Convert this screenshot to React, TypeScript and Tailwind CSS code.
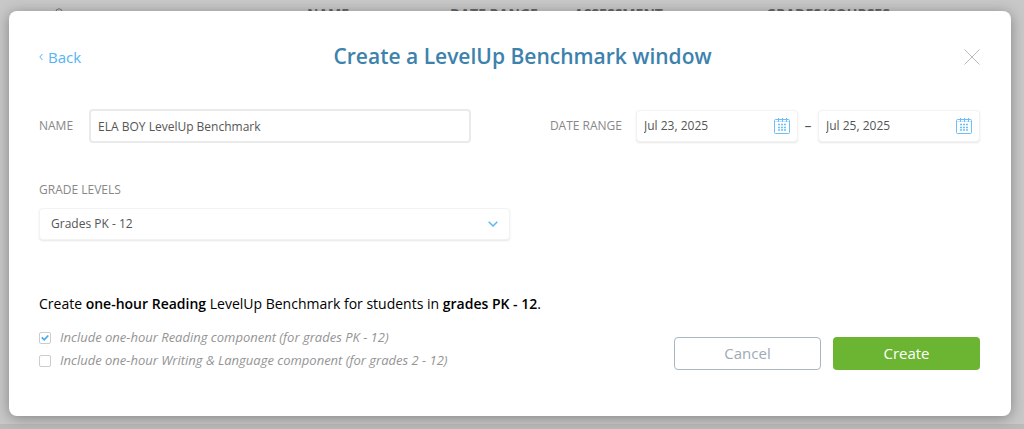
import React, { useState } from 'react';

const columns = [
  { label: "NAME", className: "w-[143px]" },
  { label: "DATE RANGE", className: "w-[124px]" },
  { label: "ASSESSMENT", className: "w-[192px]" },
  { label: "GRADES/COURSES", className: "flex-1" }
];

const CalendarIcon = () => (
  <svg className="h-4 w-4" viewBox="0 0 16 16" fill="none" stroke="#6cc0f7">
    <rect x="0.5" y="1.5" width="15" height="14" rx="1" />
    <path d="M1 3.5h14" strokeOpacity="0.4" />
    <path d="M4.5 0v4M8.5 0v4M12.5 0v4" />
    <path d="M4 6.5h9M4 9.5h9M4 12h9" strokeWidth="1.6" strokeDasharray="2 1" />
  </svg>
);

const DateField = ({ id, label, defaultValue }: { id: string; label: string; defaultValue: string }) => (
  <div className="flex h-8 w-[162px] items-center rounded border border-[#f3f3f3] bg-white px-[7px] shadow-[0_1px_2px_rgba(0,0,0,0.1)]">
    <input
      id={id}
      type="text"
      aria-label={label}
      defaultValue={defaultValue}
      className="min-w-0 flex-1 text-xs text-[#555] outline-none"
    />
    <button type="button" aria-label={`Open ${label.toLowerCase()} calendar`}>
      <CalendarIcon />
    </button>
  </div>
);

const ComponentOption = ({ label, defaultChecked = false }: { label: string; defaultChecked?: boolean }) => {
  const [checked, setChecked] = useState(defaultChecked);

  return (
    <label className="flex h-[23px] items-center gap-[9px] text-[13px] italic text-[#949494]">
      <span className="grid h-3 w-3">
        <input
          type="checkbox"
          checked={checked}
          onChange={(e) => setChecked(e.target.checked)}
          className="col-start-1 row-start-1 h-3 w-3 appearance-none rounded-[2px] border border-[#ccc] bg-white"
        />
        {checked && (
          <svg
            className="pointer-events-none col-start-1 row-start-1 h-3 w-3"
            viewBox="0 0 12 12"
            fill="none"
            stroke="#45aef0"
            strokeWidth="1.8"
          >
            <path d="M2.8 5.4l2.4 2.4L9.3 3.5" />
          </svg>
        )}
      </span>
      {label}
    </label>
  );
};

const App = () => {
  return (
    <div className="relative min-h-screen overflow-hidden bg-[#c8c8c8] font-['Open_Sans',sans-serif]">
      {/* Dimmed page behind the dialog */}
      <div className="absolute inset-0 flex flex-col justify-between">
        <div className="flex pt-1 text-sm font-bold text-[#666]">
          <div className="w-[307px] pl-[55px] pt-1">
            <svg className="h-2 w-2" viewBox="0 0 8 8" fill="none" stroke="#777">
              <circle cx="4" cy="4" r="3.2" />
            </svg>
          </div>
          {columns.map((column) => (
            <div key={column.label} className={column.className}>{column.label}</div>
          ))}
        </div>
        <div className="h-[5px] bg-[#bababa]" />
      </div>

      {/* Dialog */}
      <div
        role="dialog"
        aria-labelledby="dialog-title"
        className="relative mb-3 ml-[9px] mr-[13px] mt-[11px] rounded-lg bg-white pb-[44px] pl-[30px] pr-[31px] pt-[30px] shadow-[0_2px_14px_rgba(0,0,0,0.35)]"
      >
        <header className="flex h-8 items-center justify-between">
          <a href="#" className="flex items-center gap-[5px] text-[15px] text-[#54b4f3]">
            <svg className="h-2 w-1" viewBox="0 0 4 8" fill="none" stroke="currentColor">
              <path d="M3.5 1L0.8 4l2.7 3" />
            </svg>
            Back
          </a>
          <h1 id="dialog-title" className="text-[21px] font-semibold text-[#3c82ad]">
            Create a LevelUp Benchmark window
          </h1>
          <button type="button" aria-label="Close">
            <svg className="h-4 w-4" viewBox="0 0 16 16" fill="none" stroke="#bbb">
              <path d="M0.5 0.5l15 15M15.5 0.5l-15 15" />
            </svg>
          </button>
        </header>

        <div className="mt-9 flex items-center justify-between">
          <div className="flex items-center gap-4">
            <label htmlFor="name" className="text-xs text-[#888]">NAME</label>
            <input
              id="name"
              type="text"
              defaultValue="ELA BOY LevelUp Benchmark"
              className="h-[34px] w-[382px] rounded border-2 border-[#eaeaea] px-[7px] text-xs text-[#555] outline-none"
            />
          </div>
          <div className="flex items-center">
            <label htmlFor="start-date" className="mr-[14px] text-xs text-[#888]">DATE RANGE</label>
            <DateField id="start-date" label="Start date" defaultValue="Jul 23, 2025" />
            <span className="w-5 text-center text-sm text-[#555]">–</span>
            <DateField id="end-date" label="End date" defaultValue="Jul 25, 2025" />
          </div>
        </div>

        <div className="mt-[37px] w-[471px]">
          <label htmlFor="grades" className="block text-xs leading-5 text-[#888]">GRADE LEVELS</label>
          <div className="mt-2 grid items-center">
            <select
              id="grades"
              className="col-start-1 row-start-1 h-8 w-full appearance-none rounded border border-[#f3f3f3] bg-white px-[11px] text-xs text-[#555] shadow-[0_1px_2px_rgba(0,0,0,0.1)] outline-none"
            >
              <option>Grades PK - 12</option>
            </select>
            <svg
              className="pointer-events-none col-start-1 row-start-1 mr-3 h-[6px] w-[10px] justify-self-end"
              viewBox="0 0 10 6"
              fill="none"
              stroke="#5cb8f2"
              strokeWidth="1.5"
            >
              <path d="M0.7 0.7L5 5l4.3-4.3" />
            </svg>
          </div>
        </div>

        <p className="mt-[54px] text-sm text-black">
          Create <strong className="font-semibold">one-hour Reading</strong> LevelUp Benchmark for students in <strong className="font-semibold">grades PK - 12</strong>.
        </p>

        <div className="mt-3 flex items-center justify-between">
          <div>
            <ComponentOption label="Include one-hour Reading component (for grades PK - 12)" defaultChecked />
            <ComponentOption label="Include one-hour Writing & Language component (for grades 2 - 12)" />
          </div>
          <div className="flex gap-3 pt-2">
            <button type="button" className="h-[33px] w-[147px] rounded border border-[#a9b7c1] bg-white text-[15px] text-[#9eabb5]">
              Cancel
            </button>
            <button type="button" className="h-[33px] w-[147px] rounded bg-[#6cb533] text-[15px] text-white">
              Create
            </button>
          </div>
        </div>
      </div>
    </div>
  );
};

export default App;
